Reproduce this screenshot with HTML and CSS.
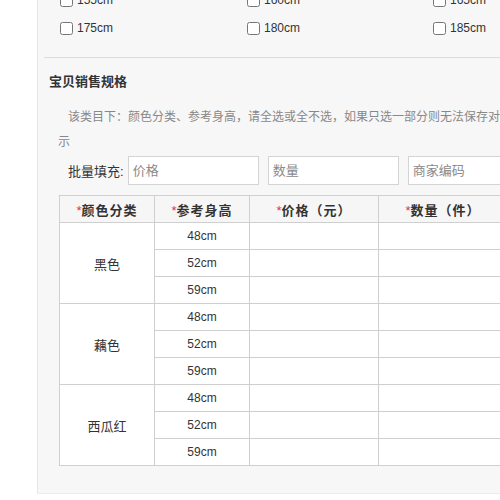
FILE: index.html
```html
<!DOCTYPE html>
<html lang="zh-CN">
<head>
<meta charset="UTF-8">
<meta name="viewport" content="width=device-width, initial-scale=1.0">
<title>宝贝销售规格</title>
<link rel="stylesheet" href="styles.css">
</head>
<body>
<div class="panel">
  <ul class="sizes">
    <li><input type="checkbox"><span>155cm</span></li>
    <li><input type="checkbox"><span>160cm</span></li>
    <li><input type="checkbox"><span>165cm</span></li>
    <li><input type="checkbox"><span>175cm</span></li>
    <li><input type="checkbox"><span>180cm</span></li>
    <li><input type="checkbox"><span>185cm</span></li>
  </ul>

  <div class="section">
    <h2 class="title">宝贝销售规格</h2>
    <div class="content">
      <p class="tip">该类目下：颜色分类、参考身高，请全选或全不选，如果只选一部分则无法保存对应信息，且宝贝详情页不会显<br>示</p>

      <div class="fill">
        <label>批量填充:</label>
        <input type="text" placeholder="价格">
        <input type="text" placeholder="数量">
        <input type="text" placeholder="商家编码">
      </div>

      <table class="sku">
        <thead>
          <tr>
            <th class="c1"><i>*</i>颜色分类</th>
            <th class="c2"><i>*</i>参考身高</th>
            <th class="c3"><i>*</i>价格（元）</th>
            <th class="c4"><i>*</i>数量（件）</th>
            <th class="c5">商家编码</th>
          </tr>
        </thead>
        <tbody>
          <tr><td rowspan="3" class="color">黑色</td><td>48cm</td><td></td><td></td><td></td></tr>
          <tr><td>52cm</td><td></td><td></td><td></td></tr>
          <tr><td>59cm</td><td></td><td></td><td></td></tr>
          <tr><td rowspan="3" class="color">藕色</td><td>48cm</td><td></td><td></td><td></td></tr>
          <tr><td>52cm</td><td></td><td></td><td></td></tr>
          <tr><td>59cm</td><td></td><td></td><td></td></tr>
          <tr><td rowspan="3" class="color">西瓜红</td><td>48cm</td><td></td><td></td><td></td></tr>
          <tr><td>52cm</td><td></td><td></td><td></td></tr>
          <tr><td>59cm</td><td></td><td></td><td></td></tr>
        </tbody>
      </table>
    </div>
  </div>
</div>
</body>
</html>
```

FILE: styles.css
```css
html, body {
  margin: 0;
  padding: 0;
  background: #fff;
  overflow: hidden;
}
body {
  font-family: "Liberation Sans", Arial, "Noto Sans CJK SC", sans-serif;
  color: #333;
  font-size: 12px;
}
.panel {
  margin: -14px 0 0 37px;
  width: 620px;
  background: #f7f7f7;
  border-left: 1px solid #e6e6e6;
  border-bottom: 1px solid #ececec;
  padding: 0 0 27px 6px;
}

/* 身高复选框 */
.sizes {
  list-style: none;
  margin: 0;
  padding: 0 0 0 16px;
  display: grid;
  grid-template-columns: 187px 186px 187px;
}
.sizes li {
  height: 28px;
  display: flex;
  align-items: center;
}
.sizes input {
  width: 13px;
  height: 13px;
  margin: 0 4px 0 0;
}
.sizes span {
  font-size: 12px;
  color: #333;
}

.section {
  margin-top: 15px;
  border-top: 1px solid #dcdcdc;
}
.title {
  margin: 14px 0 0 5px;
  font-size: 13px;
  font-weight: bold;
  line-height: 20px;
  color: #333;
}
.content {
  padding-left: 14px;
}
.tip {
  margin: 13px 0 0 0;
  color: #888;
  font-size: 12px;
  line-height: 25px;
  text-indent: 10px;
  white-space: nowrap;
}

/* 批量填充 */
.fill {
  display: flex;
  align-items: center;
  gap: 9px;
  padding-left: 10px;
  margin-top: 1px;
}
.fill label {
  font-size: 13px;
  color: #333;
  margin-right: -5px;
}
.fill input {
  box-sizing: border-box;
  height: 29px;
  width: 131px;
  border: 1px solid #d4d4d4;
  background: #fff;
  padding: 0 4px;
  font-size: 13px;
  font-family: "Liberation Sans", "Noto Sans CJK SC", sans-serif;
  outline: none;
}
.fill input::placeholder {
  color: #8a8a8a;
}

/* 规格表 */
.sku {
  margin: 10px 0 0 1px;
  border-collapse: collapse;
  table-layout: fixed;
  background: #fff;
}
.sku th, .sku td {
  border: 1px solid #cfcfcf;
  height: 26px;
  padding: 0;
  text-align: center;
}
.sku th {
  background: #f6f6f6;
  font-size: 13px;
  font-weight: bold;
  color: #333;
  letter-spacing: 1px;
}
.sku th i {
  font-style: normal;
  color: #d2364b;
  font-weight: normal;
  letter-spacing: 0;
}
.sku td {
  font-size: 12px;
  color: #333;
}
.sku td.color {
  font-size: 13px;
}
.c1 { width: 94px; }
.c2 { width: 94px; }
.c3 { width: 128px; }
.c4 { width: 128px; }
.c5 { width: 128px; }
```
